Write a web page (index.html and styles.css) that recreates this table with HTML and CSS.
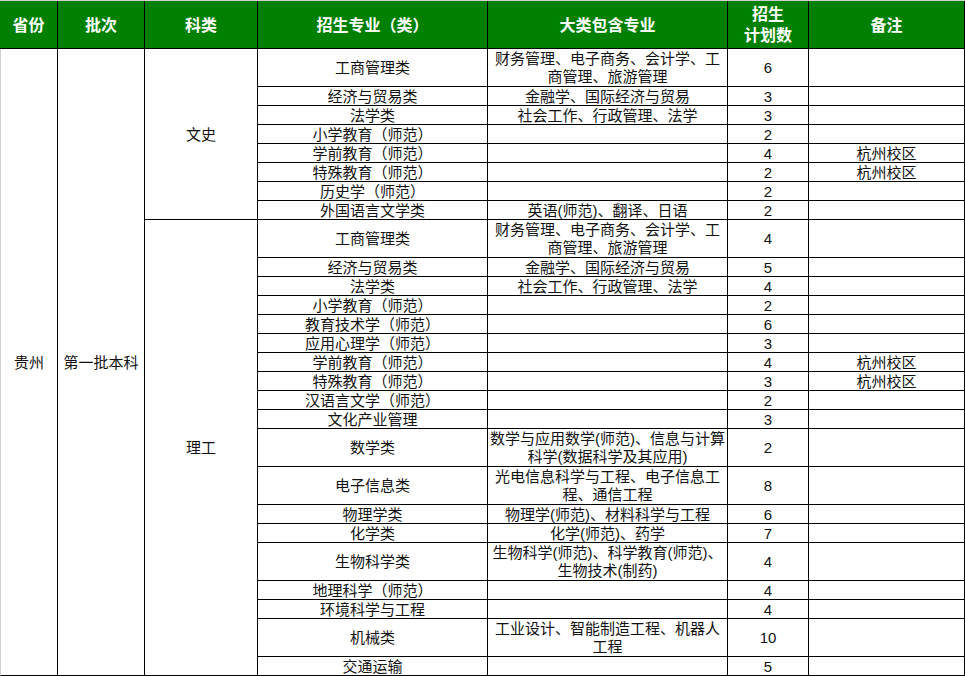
FILE: index.html
```html
<!DOCTYPE html>
<html lang="zh">
<head>
<meta charset="utf-8">
<title>招生计划</title>
<link rel="stylesheet" href="styles.css">
</head>
<body>
<div class="sheet">
  <div class="c h">省份</div>
  <div class="c h">批次</div>
  <div class="c h">科类</div>
  <div class="c h">招生专业（类）</div>
  <div class="c h">大类包含专业</div>
  <div class="c h">招生<br>计划数</div>
  <div class="c h">备注</div>

  <div class="c first span-all">贵州</div>
  <div class="c span-all">第一批本科</div>
  <div class="c span-wen">文史</div>

  <div class="c">工商管理类</div><div class="c">财务管理、电子商务、会计学、工<br>商管理、旅游管理</div><div class="c">6</div><div class="c"></div>
  <div class="c">经济与贸易类</div><div class="c">金融学、国际经济与贸易</div><div class="c">3</div><div class="c"></div>
  <div class="c">法学类</div><div class="c">社会工作、行政管理、法学</div><div class="c">3</div><div class="c"></div>
  <div class="c">小学教育（师范）</div><div class="c"></div><div class="c">2</div><div class="c"></div>
  <div class="c">学前教育（师范）</div><div class="c"></div><div class="c">4</div><div class="c">杭州校区</div>
  <div class="c">特殊教育（师范）</div><div class="c"></div><div class="c">2</div><div class="c">杭州校区</div>
  <div class="c">历史学（师范）</div><div class="c"></div><div class="c">2</div><div class="c"></div>
  <div class="c">外国语言文学类</div><div class="c">英语(师范)、翻译、日语</div><div class="c">2</div><div class="c"></div>

  <div class="c span-li">理工</div>

  <div class="c">工商管理类</div><div class="c">财务管理、电子商务、会计学、工<br>商管理、旅游管理</div><div class="c">4</div><div class="c"></div>
  <div class="c">经济与贸易类</div><div class="c">金融学、国际经济与贸易</div><div class="c">5</div><div class="c"></div>
  <div class="c">法学类</div><div class="c">社会工作、行政管理、法学</div><div class="c">4</div><div class="c"></div>
  <div class="c">小学教育（师范）</div><div class="c"></div><div class="c">2</div><div class="c"></div>
  <div class="c">教育技术学（师范）</div><div class="c"></div><div class="c">6</div><div class="c"></div>
  <div class="c">应用心理学（师范）</div><div class="c"></div><div class="c">3</div><div class="c"></div>
  <div class="c">学前教育（师范）</div><div class="c"></div><div class="c">4</div><div class="c">杭州校区</div>
  <div class="c">特殊教育（师范）</div><div class="c"></div><div class="c">3</div><div class="c">杭州校区</div>
  <div class="c">汉语言文学（师范）</div><div class="c"></div><div class="c">2</div><div class="c"></div>
  <div class="c">文化产业管理</div><div class="c"></div><div class="c">3</div><div class="c"></div>
  <div class="c">数学类</div><div class="c">数学与应用数学(师范)、信息与计算<br>科学(数据科学及其应用)</div><div class="c">2</div><div class="c"></div>
  <div class="c">电子信息类</div><div class="c">光电信息科学与工程、电子信息工<br>程、通信工程</div><div class="c">8</div><div class="c"></div>
  <div class="c">物理学类</div><div class="c">物理学(师范)、材料科学与工程</div><div class="c">6</div><div class="c"></div>
  <div class="c">化学类</div><div class="c">化学(师范)、药学</div><div class="c">7</div><div class="c"></div>
  <div class="c">生物科学类</div><div class="c">生物科学(师范)、科学教育(师范)、<br>生物技术(制药)</div><div class="c">4</div><div class="c"></div>
  <div class="c">地理科学（师范）</div><div class="c"></div><div class="c">4</div><div class="c"></div>
  <div class="c">环境科学与工程</div><div class="c"></div><div class="c">4</div><div class="c"></div>
  <div class="c">机械类</div><div class="c">工业设计、智能制造工程、机器人<br>工程</div><div class="c">10</div><div class="c"></div>
  <div class="c">交通运输</div><div class="c"></div><div class="c">5</div><div class="c"></div>
</div>
</body>
</html>
```

FILE: styles.css
```css
html, body {
  margin: 0;
  padding: 0;
  background: #ffffff;
}

.sheet {
  width: 965px;
  box-sizing: border-box;
  border-top: 1px solid #d0d0d0;
  display: grid;
  grid-template-columns: 58px 87px 113px 230px 240px 81px 156px;
  grid-template-rows: 48px 38px 19px 19px 19px 19px 19px 19px 19px 38px 19px 19px 19px 19px 19px 19px 19px 19px 19px 38px 38px 19px 19px 38px 19px 19px 38px 19px;
  font-family: "Liberation Sans", "Noto Sans CJK SC", sans-serif;
  font-size: 15px;
  color: #111111;
}

.c {
  box-sizing: border-box;
  border-right: 1px solid #000000;
  border-bottom: 1px solid #000000;
  display: flex;
  align-items: center;
  justify-content: center;
  text-align: center;
  line-height: 18px;
  white-space: nowrap;
  overflow: hidden;
  padding-top: 1px;
}

.h {
  background: #008000;
  color: #ffffff;
  font-weight: bold;
  font-size: 16px;
  line-height: 21px;
}

.first {
  border-left: 1px solid #d0d0d0;
}

.span-all {
  grid-row: 2 / span 27;
}

.span-wen {
  grid-column: 3;
  grid-row: 2 / span 8;
}

.span-li {
  grid-column: 3;
  grid-row: 10 / span 19;
}
```
